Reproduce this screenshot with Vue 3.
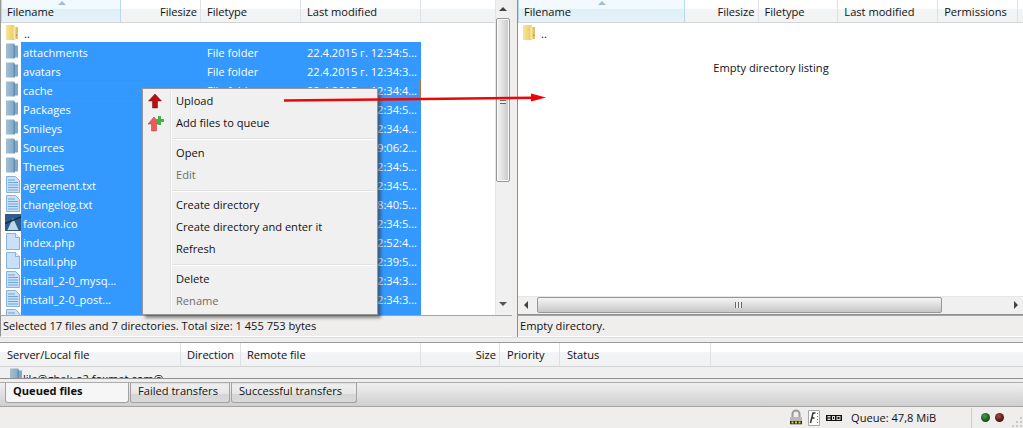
<script setup>
const rows = [
  { n: 'attachments', k: 'folder', t: 'File folder', d: '22.4.2015 г. 12:34:5...' },
  { n: 'avatars', k: 'folder', t: 'File folder', d: '22.4.2015 г. 12:34:3...' },
  { n: 'cache', k: 'folder', t: 'File folder', d: '22.4.2015 г. 12:34:4...', focus: true },
  { n: 'Packages', k: 'folder', t: 'File folder', d: '22.4.2015 г. 12:34:5...' },
  { n: 'Smileys', k: 'folder', t: 'File folder', d: '22.4.2015 г. 12:34:4...' },
  { n: 'Sources', k: 'folder', t: 'File folder', d: '22.4.2015 г. 19:06:2...' },
  { n: 'Themes', k: 'folder', t: 'File folder', d: '22.4.2015 г. 12:34:5...' },
  { n: 'agreement.txt', k: 'text', t: '', d: '22.4.2015 г. 12:34:5...' },
  { n: 'changelog.txt', k: 'text', t: '', d: '22.4.2015 г. 18:40:5...' },
  { n: 'favicon.ico', k: 'ico', t: '', d: '22.4.2015 г. 12:34:5...' },
  { n: 'index.php', k: 'doc', t: '', d: '22.4.2015 г. 12:52:4...' },
  { n: 'install.php', k: 'doc', t: '', d: '22.4.2015 г. 12:39:5...' },
  { n: 'install_2-0_mysq...', k: 'text', t: '', d: '22.4.2015 г. 12:34:3...' },
  { n: 'install_2-0_post...', k: 'text', t: '', d: '22.4.2015 г. 12:34:3...' },
  { n: '', k: 'text', t: '', d: '' },
]
</script>

<template>
  <div class="app">
    <svg class="defs" width="0" height="0" aria-hidden="true">
      <defs>
        <linearGradient id="yf" x1="0" x2="1" y1="0" y2="0"><stop offset="0" stop-color="#f8e596"/><stop offset="1" stop-color="#e9c964"/></linearGradient>
        <linearGradient id="bf" x1="0" x2="1" y1="0" y2="0"><stop offset="0" stop-color="#a4bfd2"/><stop offset="1" stop-color="#7ea8c6"/></linearGradient>
        <symbol id="folderY" viewBox="0 0 16 17">
          <path d="M1 1h8l1 1v14H1z" fill="url(#yf)"/>
          <path d="M10 3h3v12h-3z" fill="#e3c060"/>
          <path d="M8.500 2l2 1v13l-2-1z" fill="#f6e9a8"/>
          <path d="M11.500 10l.8 2h-1.600z" fill="#4ea3d8"/>
        </symbol>
        <symbol id="folderB" viewBox="0 0 16 17">
          <path d="M1 .5h8l1 1v14H1z" fill="url(#bf)"/>
          <path d="M10 2.500h3v12h-3z" fill="#7fa9c7"/>
          <path d="M8.500 1.500l1.500 1v12l-1.500 1z" fill="#5f8fb2"/>
        </symbol>
        <symbol id="text" viewBox="0 0 14 17">
          <path d="M.5.5h9l4 4v12H.5z" fill="#c9e0f7" stroke="#86b2dc"/>
          <path d="M2 4h7M2 6.500h10M2 9h10M2 11.500h10M2 14h10" stroke="#6fa6da"/>
        </symbol>
        <symbol id="doc" viewBox="0 0 14 17">
          <path d="M.5.5h9l4 4v12H.5z" fill="#c9e0f7" stroke="#86b2dc"/>
          <path d="M9.500.5v4h4" fill="#e6f2fc" stroke="#86b2dc"/>
        </symbol>
        <symbol id="ico" viewBox="0 0 16 17">
          <path d="M0 0h16v17H0z" fill="#2f5c8a"/>
          <path d="M8 4L2.500 16h11z" fill="#bcd7ea"/>
          <path d="M0 9.500L16 3" stroke="#0f2c4c" stroke-width="1.400"/>
        </symbol>
      </defs>
    </svg>

    <div class="panes">
      <section class="pane left">
        <div class="body">
          <div class="list">
            <div class="head">
              <div class="hc sorted c-name-l"><span class="sort"></span>Filename</div>
              <div class="hc right c-size-l">Filesize</div>
              <div class="hc c-type-l">Filetype</div>
              <div class="hc c-date-l">Last modified</div>
              <div class="hc rest"></div>
            </div>
            <div class="rows">
              <div class="row">
                <svg class="ic" width="16" height="17"><use href="#folderY"/></svg>
                <span class="up">..</span>
              </div>
              <div v-for="r in rows" :key="r.n" class="row">
                <svg v-if="r.k === 'folder'" class="ic" width="16" height="17"><use href="#folderB"/></svg>
                <svg v-else-if="r.k === 'ico'" class="ic" width="16" height="17"><use href="#ico"/></svg>
                <svg v-else class="ic doc" width="14" height="17"><use :href="r.k === 'text' ? '#text' : '#doc'"/></svg>
                <div class="sel" :class="{ focus: r.focus }">
                  <span class="cell sn">{{ r.n }}</span>
                  <span class="cell st">{{ r.t }}</span>
                  <span class="cell sd">{{ r.d }}</span>
                </div>
              </div>
            </div>
          </div>
          <div class="vbar">
            <span class="tri up-tri"></span>
            <div class="vthumb"><span class="grip-h"></span></div>
            <span class="tri down-tri"></span>
          </div>
        </div>
        <div class="status">Selected 17 files and 7 directories. Total size: 1 455 753 bytes</div>
      </section>

      <section class="pane rightp">
        <div class="body">
          <div class="list wide">
            <div class="head">
              <div class="hc sorted c-name-r"><span class="sort r"></span>Filename</div>
              <div class="hc right c-size-r">Filesize</div>
              <div class="hc c-type-r">Filetype</div>
              <div class="hc c-date-r">Last modified</div>
              <div class="hc c-perm-r">Permissions</div>
              <div class="hc rest"></div>
            </div>
            <div class="rows grow">
              <div class="row">
                <svg class="ic" width="16" height="17"><use href="#folderY"/></svg>
                <span class="up">..</span>
              </div>
              <div class="empty">Empty directory listing</div>
            </div>
            <div class="hbar">
              <span class="tri left-tri"></span>
              <div class="hthumb"><span class="grip-v"></span></div>
              <span class="tri right-tri"></span>
            </div>
          </div>
        </div>
        <div class="status">Empty directory.</div>
      </section>
    </div>

    <div class="sash"></div>

    <section class="queue">
      <div class="head qhead">
        <div class="hc q1">Server/Local file</div>
        <div class="hc q2">Direction</div>
        <div class="hc q3">Remote file</div>
        <div class="hc right q4">Size</div>
        <div class="hc q5">Priority</div>
        <div class="hc q6">Status</div>
        <div class="hc rest"></div>
      </div>
      <div class="qrow">
        <div class="qsel">
          <svg class="qic" width="16" height="17"><use href="#folderB"/></svg>
          <span class="qtext">lila@ghak-o2.foxmat.com@</span>
        </div>
      </div>
    </section>

    <div class="tabs">
      <div class="tab active">Queued files</div>
      <div class="tab">Failed transfers</div>
      <div class="tab">Successful transfers</div>
    </div>

    <footer class="foot">
      <svg class="lock" width="14" height="17" viewBox="0 0 14 17">
        <path d="M3.500 8V5a3.500 3.500 0 0 1 7 0v3" fill="none" stroke="#9a9a9a" stroke-width="2"/>
        <path d="M1 8h12v8H1z" fill="#b9b9b9"/>
        <path d="M1 12h12v3H1z" fill="#2c2c20"/>
        <path d="M2.500 12.500h2v2h-2zM6 12.500h2v2H6zM9.500 12.500h2v2h-2z" fill="#e5cf3a"/>
      </svg>
      <svg class="fz" width="12" height="16" viewBox="0 0 12 16">
        <path d="M.5.5h11v15H.5z" fill="#fff" stroke="#a8a8a8"/>
        <path d="M2.500 13l2.500-10h2.500M3.500 8h3" fill="none" stroke="#333" stroke-width="1.500"/>
        <path d="M9.500 3v1M9.500 6v1M9.500 9v1M9.500 12v1" stroke="#777"/>
      </svg>
      <svg class="sftp" width="16" height="6" viewBox="0 0 16 6">
        <path d="M0 0h16v6H0z" fill="#111"/>
        <path d="M1.500 1h3v1h-3zM1.500 2.500h3v1h-3zM1.500 4h3v1h-3zM6 1h3v4H6zM10.500 1h4v4h-4z" fill="#ddd"/>
        <path d="M7 2h1v2H7zM11.500 2h2v2h-2z" fill="#111"/>
      </svg>
      <span class="queue-size">Queue: 47,8 MiB</span>
      <span class="vsep"></span>
      <span class="led green"></span>
      <span class="led red"></span>
      <svg class="gripper" width="12" height="12" viewBox="0 0 12 12">
        <path d="M9 1h2v2H9zM5 5h2v2H5zM9 5h2v2H9zM1 9h2v2H1zM5 9h2v2H5zM9 9h2v2H9z" fill="#c9c7c7"/>
      </svg>
    </footer>

    <div class="menu">
      <div class="mitem">
        <svg class="mic" width="16" height="16" viewBox="0 0 16 16">
          <path d="M8 1l6.500 7H10.500v7h-5V8H1.500z" fill="#b80f0f" stroke="#7a0a0a" stroke-width=".5"/>
        </svg>
        Upload
      </div>
      <div class="mitem">
        <svg class="mic" width="18" height="17" viewBox="0 0 18 17">
          <path d="M7 2l6 7H9.500v7h-5V9H1z" fill="#ee5a5a" stroke="#b93232" stroke-width=".5"/>
          <path d="M11 1h3v3h3v3h-3v3h-3V7H8V4h3z" fill="#47b048"/>
        </svg>
        Add files to queue
      </div>
      <div class="msep"></div>
      <div class="mitem">Open</div>
      <div class="mitem off">Edit</div>
      <div class="msep"></div>
      <div class="mitem">Create directory</div>
      <div class="mitem">Create directory and enter it</div>
      <div class="mitem">Refresh</div>
      <div class="msep"></div>
      <div class="mitem">Delete</div>
      <div class="mitem off">Rename</div>
    </div>

    <svg class="arrow" width="1023" height="428" viewBox="0 0 1023 428">
      <path d="M284 100.500L380 99.500L534 97.800" fill="none" stroke="#ee0606" stroke-width="2.500"/>
      <path d="M531 93.500L546 97.500L531 101.500z" fill="#ee0606"/>
    </svg>
  </div>
</template>

<style>
html, body { margin: 0; padding: 0; background: #f0eded; }
</style>

<style scoped>
.app {
  position: relative;
  width: 1023px;
  height: 428px;
  overflow: hidden;
  background: #f0eded;
  color: #111;
  font-family: "Open Sans", "Noto Sans", sans-serif;
  font-size: 11.1px;
  display: flex;
  flex-direction: column;
}
.defs { position: absolute; }
.panes { display: flex; height: 337px; gap: 5px; flex: none; }
.pane { display: flex; flex-direction: column; }
.left { width: 512px; }
.rightp { width: 506px; flex: 1; border-left: 1px solid #8f8f8f; }
.body { height: 315px; display: flex; background: #fff; overflow: hidden; }
.left .body { border-left: 1px solid #9a9a9a; }
.list { width: 494px; display: flex; flex-direction: column; overflow: hidden; }
.list.wide { width: 100%; }
.head {
  display: flex;
  height: 23px;
  flex: none;
  background: linear-gradient(#fff 0, #fff 38%, #f2f4f6 42%, #f0f2f4 100%);
  border-bottom: 1px solid #d5d5d5;
  box-sizing: border-box;
}
.hc {
  position: relative;
  box-sizing: border-box;
  padding: 4px 0 0 6px;
  border-right: 1px solid #dfe2e4;
  white-space: nowrap;
  line-height: 16px;
  overflow: hidden;
}
.hc.right { text-align: right; padding: 4px 3px 0 0; }
.hc.rest { flex: 1; border-right: 0; }
.sorted {
  padding-left: 5px;
  background: linear-gradient(#f2faff 0, #f2faff 38%, #dfeff8 42%, #e6f3fa 100%);
  border-left: 1px solid #b7dcef;
  border-right: 1px solid #b7dcef;
}
.sort {
  position: absolute;
  left: 56px;
  top: 1px;
  width: 0;
  height: 0;
  border-left: 4px solid transparent;
  border-right: 4px solid transparent;
  border-bottom: 4px solid #9cc0d6;
}
.sort.r { left: 79px; }
.c-name-l { width: 120px; }
.c-size-l { width: 80px; }
.c-type-l { width: 100px; }
.c-date-l { width: 120px; }
.c-name-r { width: 167px; }
.c-size-r { width: 74px; }
.c-type-r { width: 80px; }
.c-date-r { width: 100px; }
.c-perm-r { width: 80px; }
.rows { height: 292px; overflow: hidden; flex: none; }
.rows.grow { height: 273px; position: relative; }
.row { display: flex; height: 19px; align-items: center; position: relative; flex: none; }
.ic { flex: none; margin-left: 4px; }
.ic.doc { margin-left: 5px; margin-right: 1px; }
.up { margin-left: 3px; padding-top: 2px; }
.sel {
  width: 400px;
  height: 19px;
  padding-top: 2px;
  background-color: #3399ff;
  color: #fff;
  display: flex;
  align-items: center;
  box-sizing: border-box;
  flex: none;
}
.sel.focus {
  background-image:
    repeating-linear-gradient(90deg, #b9742f 0 1px, transparent 1px 2px),
    repeating-linear-gradient(90deg, #b9742f 0 1px, transparent 1px 2px),
    repeating-linear-gradient(#b9742f 0 1px, transparent 1px 2px),
    repeating-linear-gradient(#b9742f 0 1px, transparent 1px 2px);
  background-size: 100% 1px, 100% 1px, 1px 100%, 1px 100%;
  background-position: 0 0, 0 100%, 0 0, 100% 0;
  background-repeat: no-repeat;
}
.cell { white-space: nowrap; overflow: hidden; box-sizing: border-box; flex: none; line-height: 16px; }
.sn { width: 186px; padding-left: 2px; }
.st { width: 100px; }
.sd { width: 114px; }
.vbar {
  width: 16px;
  position: relative;
  background: #f0f0f0;
  border-left: 1px solid #e4e4e4;
  flex: none;
}
.vthumb {
  position: absolute;
  top: 18px;
  left: 0;
  width: 14px;
  height: 164px;
  border: 1px solid #979797;
  border-radius: 2px;
  box-sizing: border-box;
  background: linear-gradient(90deg, #f4f4f4, #dcdcdc 55%, #c7c7c7);
  box-shadow: inset 0 0 0 1px #fafafa;
}
.grip-h {
  position: absolute;
  left: 3px;
  right: 3px;
  top: 78px;
  height: 7px;
  background: repeating-linear-gradient(#666 0 1px, #eee 1px 3px);
}
.grip-v {
  position: absolute;
  top: 4px;
  bottom: 4px;
  left: 197px;
  width: 7px;
  background: repeating-linear-gradient(90deg, #666 0 1px, #eee 1px 3px);
}
.tri { position: absolute; width: 0; height: 0; }
.up-tri {
  top: 7px; left: 3px;
  border-left: 4px solid transparent; border-right: 4px solid transparent;
  border-bottom: 4px solid #444;
}
.down-tri {
  top: 302px; left: 3px;
  border-left: 4px solid transparent; border-right: 4px solid transparent;
  border-top: 4px solid #555;
}
.left-tri {
  left: 6px; top: 4px;
  border-top: 4px solid transparent; border-bottom: 4px solid transparent;
  border-right: 4px solid #444;
}
.right-tri {
  right: 6px; top: 4px;
  border-top: 4px solid transparent; border-bottom: 4px solid transparent;
  border-left: 4px solid #444;
}
.empty { position: absolute; left: 0; right: 0; top: 35px; text-align: center; line-height: 19px; }
.hbar {
  height: 19px;
  background: #f0f0f0;
  position: relative;
  border-bottom: 1px solid #8f8f8f;
  border-top: 1px solid #e6e6e6;
  box-sizing: border-box;
  flex: none;
}
.hthumb {
  position: absolute;
  top: 0;
  left: 19px;
  width: 405px;
  height: 16px;
  border: 1px solid #979797;
  border-radius: 2px;
  box-sizing: border-box;
  background: linear-gradient(#f4f4f4, #dcdcdc 55%, #c7c7c7);
}
.status {
  height: 22px;
  line-height: 19px;
  padding-left: 2px;
  background: #f0eded;
  white-space: nowrap;
  border-top: 1px solid #a5a5a5;
  border-bottom: 1px solid #fff;
  box-sizing: border-box;
}
.left .status { border-left: 1px solid #8f8f8f; }
.sash { height: 5px; flex: none; border-top: 1px solid #dcdcdc; box-sizing: border-box; }
.queue {
  height: 37px;
  background: #fff;
  border-top: 1px solid #9a9a9a;
  border-bottom: 1px solid #8f8f8f;
  box-sizing: border-box;
  overflow: hidden;
  flex: none;
}
.qhead { height: 24px; }
.q1 { width: 181px; padding-left: 7px; }
.q2 { width: 60px; }
.q3 { width: 180px; }
.q4 { width: 79px; padding-right: 5px; }
.q5 { width: 60px; padding-left: 7px; }
.q6 { width: 151px; padding-left: 7px; }
.qrow { height: 11px; overflow: hidden; background: #f0f0f0; }
.qsel { width: 711px; height: 19px; display: flex; align-items: flex-start; }
.qic { margin: 1px 0 0 9px; flex: none; }
.qtext { margin-left: -2px; line-height: 19px; margin-top: 2px; }
.tabs {
  display: flex;
  height: 25px;
  flex: none;
  box-sizing: border-box;
  margin-top: 3px;
  padding-left: 5px;
  background: linear-gradient(#f0f0f0 0, #e6e6e6 30%, #cfcfcf 100%);
  border-top: 1px solid #ababab;
  border-bottom: 1px solid #a3a3a3;
}
.tab {
  box-sizing: border-box;
  height: 20px;
  line-height: 16px;
  padding: 0 7px;
  border: 1px solid #a2a2a2;
  border-top: 0;
  border-radius: 0 0 3px 3px;
  background: linear-gradient(#dcdcdc 0, #efefef 10%, #e6e6e6 55%, #d5d5d5 60%, #dadada 100%);
  margin-left: 1px;
  white-space: nowrap;
}
.tab:nth-child(2) { width: 100px; }
.tab:nth-child(3) { width: 126px; }
.tab.active {
  width: 124px;
  margin-left: 0;
  font-weight: 700;
  background: #f6f6f6;
}
.foot {
  flex: 1;
  position: relative;
  display: flex;
  align-items: center;
  background: #f0eded;
  padding-left: 789px;
}
.lock { flex: none; }
.fz { flex: none; margin-left: 5px; }
.sftp { flex: none; margin-left: 6px; }
.queue-size { margin-left: 9px; width: 120px; flex: none; }
.vsep { width: 1px; height: 20px; background: #cfcccc; flex: none; }
.led { width: 9px; height: 9px; border-radius: 50%; flex: none; }
.led.green { margin-left: 9px; background: radial-gradient(circle at 40% 35%, #4a9a4a, #0f4d16 70%); }
.led.red { margin-left: 5px; background: radial-gradient(circle at 40% 35%, #a04a4a, #4d0f0f 70%); }
.gripper { position: absolute; right: 0; bottom: 0; }
.menu {
  position: absolute;
  left: 142px;
  top: 88px;
  width: 236px;
  height: 227px;
  box-sizing: border-box;
  padding: 2px 2px 2px 28px;
  background: #f0f0f0;
  border: 1px solid #979797;
  box-shadow: 3px 3px 3px rgba(50, 50, 50, .55);
}
.menu::before {
  content: "";
  position: absolute;
  left: 27px;
  top: 2px;
  bottom: 2px;
  width: 2px;
  background: linear-gradient(90deg, #e2e3e3 50%, #fff 50%);
}
.mitem {
  position: relative;
  height: 22px;
  line-height: 19px;
  padding-left: 5px;
  white-space: nowrap;
  color: #111;
}
.mitem.off { color: #6d6d6d; }
.msep { height: 2px; margin: 3px 0 3px 1px; background: linear-gradient(#e0e0e0 50%, #fff 50%); }
.mic { position: absolute; left: -24px; top: 2px; }
.arrow { position: absolute; left: 0; top: 0; pointer-events: none; }
</style>
